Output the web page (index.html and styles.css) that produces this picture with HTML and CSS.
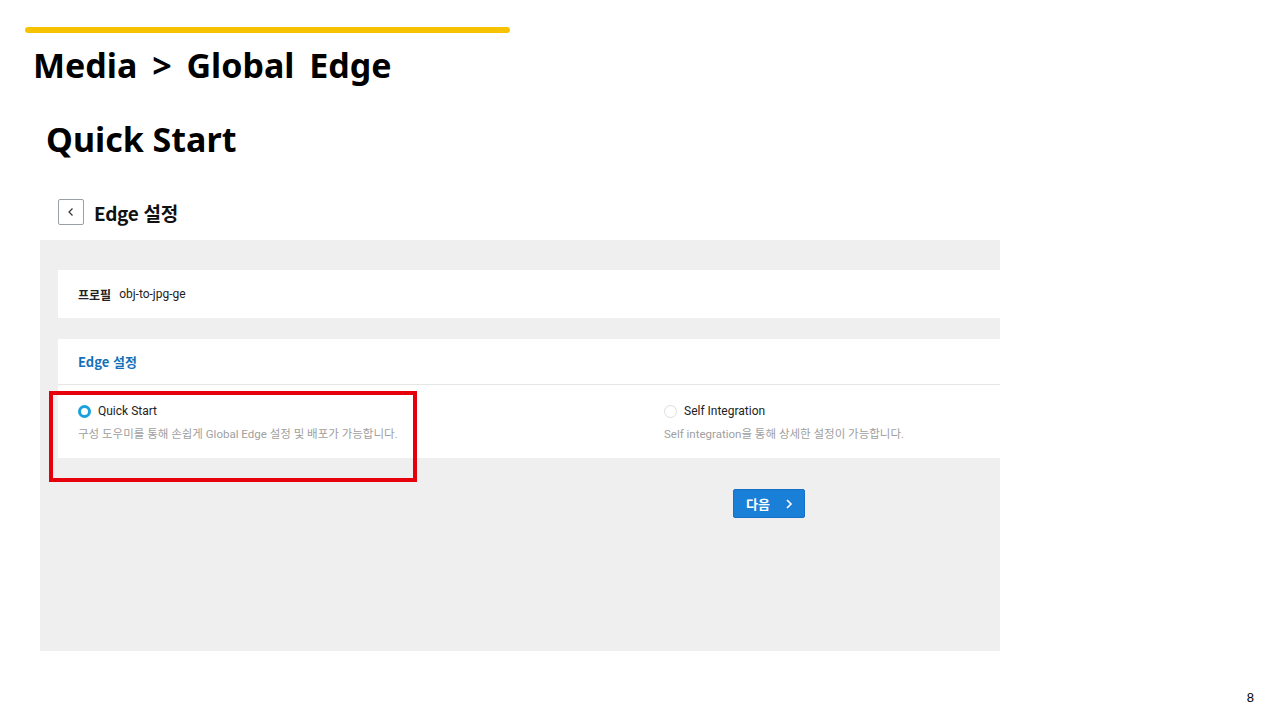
FILE: index.html
```html
<!DOCTYPE html>
<html lang="ko">
<head>
<meta charset="utf-8">
<title>Media &gt; Global Edge</title>
<link rel="stylesheet" href="styles.css">
</head>
<body>
<div class="slide">
  <div class="accent-bar"></div>
  <h1 class="slide-title">Media &gt; Global Edge</h1>
  <h2 class="section-title">Quick Start</h2>

  <div class="page-head">
    <button class="back-btn" aria-label="back">
      <svg width="10" height="10" viewBox="0 0 10 10"><path d="M6.5 1.5 L3 5 L6.5 8.5" fill="none" stroke="#333" stroke-width="1.2"/></svg>
    </button>
    <span class="page-head-title">Edge 설정</span>
  </div>

  <div class="panel">
    <div class="card profile-card">
      <span class="profile-label">프로필</span>
      <span class="profile-value">obj-to-jpg-ge</span>
    </div>

    <div class="card setting-card">
      <div class="setting-head">Edge 설정</div>
      <div class="options">
        <div class="option">
          <div class="option-row">
            <span class="radio checked"></span>
            <span class="option-label">Quick Start</span>
          </div>
          <div class="option-desc">구성 도우미를 통해 손쉽게 Global Edge 설정 및 배포가 가능합니다.</div>
        </div>
        <div class="option option-right">
          <div class="option-row">
            <span class="radio"></span>
            <span class="option-label">Self Integration</span>
          </div>
          <div class="option-desc">Self integration을 통해 상세한 설정이 가능합니다.</div>
        </div>
      </div>
    </div>

    <div class="actions">
      <button class="next-btn">다음
        <svg width="10" height="12" viewBox="0 0 10 12"><path d="M3 2 L7 6 L3 10" fill="none" stroke="#fff" stroke-width="1.6"/></svg>
      </button>
    </div>
  </div>

  <div class="highlight"></div>
  <div class="page-num">8</div>
</div>
</body>
</html>
```

FILE: styles.css
```css
* { box-sizing: border-box; }
html, body { margin: 0; padding: 0; background: #fff; }
body { font-family: "Noto Sans", "Noto Sans CJK KR", sans-serif; }

.slide {
  position: relative;
  width: 1280px;
  height: 720px;
  overflow: hidden;
  padding-top: 27px;
}

.accent-bar {
  margin-left: 25px;
  width: 485px;
  height: 6px;
  border-radius: 3px;
  background: #f7c300;
}

.slide-title {
  margin: 6px 0 0 33px;
  font-family: "Noto Sans", "Noto Sans CJK KR", sans-serif;
  font-weight: 700;
  font-size: 34px;
  line-height: 52px;
  color: #000;
  word-spacing: 6px;
}

.section-title {
  margin: 22px 0 0 46px;
  font-family: "Noto Sans", "Noto Sans CJK KR", sans-serif;
  font-weight: 700;
  font-size: 34px;
  line-height: 52px;
  color: #000;
}

.page-head {
  display: flex;
  align-items: center;
  margin: 34px 0 0 58px;
  height: 26px;
  gap: 10px;
}

.back-btn {
  width: 26px;
  height: 26px;
  padding: 0;
  border: 1px solid #9aa0a8;
  border-radius: 2px;
  background: #fff;
  display: flex;
  align-items: center;
  justify-content: center;
}

.page-head-title {
  font-family: "Noto Sans CJK KR", sans-serif;
  font-weight: 700;
  font-size: 19px;
  color: #111;
  letter-spacing: -0.3px;
}

.panel {
  margin: 15px 0 0 40px;
  width: 960px;
  height: 411px;
  background: #efefef;
  padding: 30px 0 0 18px;
}

.card {
  background: #fff;
  width: 942px;
}

.profile-card {
  height: 48px;
  display: flex;
  align-items: center;
  padding-left: 20px;
  gap: 8px;
  font-size: 12px;
}

.profile-label {
  font-family: "Noto Sans CJK KR", sans-serif;
  font-weight: 700;
  color: #222;
}

.profile-value {
  font-family: Roboto, "Noto Sans CJK KR", sans-serif;
  color: #222;
  font-size: 12px;
}

.setting-card {
  margin-top: 21px;
  height: 119px;
}

.setting-head {
  height: 46px;
  border-bottom: 1px solid #e6e6e6;
  padding-left: 20px;
  display: flex;
  align-items: center;
  font-family: "Noto Sans CJK KR", sans-serif;
  font-weight: 700;
  font-size: 13px;
  color: #1670b8;
}

.options {
  display: flex;
  padding: 18px 0 0 20px;
}

.option { width: 586px; }
.option-right { width: auto; }

.option-row {
  display: flex;
  align-items: center;
  gap: 7px;
  height: 16px;
}

.radio {
  width: 13px;
  height: 13px;
  border-radius: 50%;
  border: 1px solid #ddd;
  background: #fff;
}

.radio.checked {
  border: 3px solid #1aa0dc;
}

.option-label {
  font-family: Roboto, "Noto Sans CJK KR", sans-serif;
  font-size: 12px;
  color: #222;
}

.option-desc {
  margin-top: 6px;
  font-family: Roboto, "Noto Sans CJK KR", sans-serif;
  font-size: 11.5px;
  color: #a0a0a0;
}

.actions {
  margin-top: 31px;
  padding-left: 675px;
}

.next-btn {
  width: 72px;
  height: 29px;
  border: 1px solid #1670c8;
  border-radius: 2px;
  background: #1a7fd6;
  color: #fff;
  font-family: "Noto Sans CJK KR", sans-serif;
  font-weight: 700;
  font-size: 13px;
  display: flex;
  align-items: center;
  justify-content: center;
  gap: 14px;
  padding: 0 0 0 2px;
}

.highlight {
  position: absolute;
  left: 49px;
  top: 391px;
  width: 368px;
  height: 91px;
  border: 4px solid #e5000b;
}

.page-num {
  position: absolute;
  right: 26px;
  top: 690px;
  font-family: "Liberation Sans", sans-serif;
  font-size: 13px;
  color: #000;
}
```
